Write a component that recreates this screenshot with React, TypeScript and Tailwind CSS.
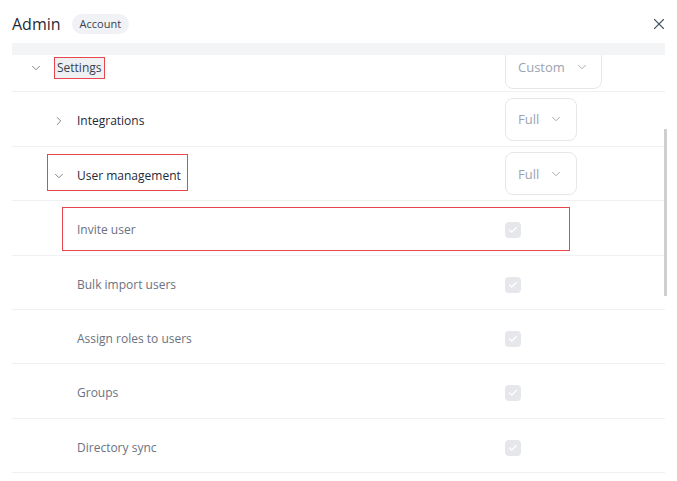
import { X, ChevronDown, ChevronRight, Check } from "lucide-react";

const CHILDREN = [
  { label: "Invite user", h: "h-[55px]" },
  { label: "Bulk import users", h: "h-[54px]" },
  { label: "Assign roles to users", h: "h-[54px]" },
  { label: "Groups", h: "h-[55px]" },
  { label: "Directory sync", h: "h-[54px]" },
];

function Select({ label, wide }: { label: string; wide?: boolean }) {
  return (
    <div
      className={`flex items-center gap-2.5 h-[43px] px-3 rounded-lg border border-[#e5e7eb] text-[13px] text-[#9ca3af] ${
        wide ? "w-[97px]" : "w-[72px]"
      }`}
    >
      <span className="whitespace-nowrap pt-[2px]">{label}</span>
      <ChevronDown className="w-3.5 h-3.5" strokeWidth={1.5} />
    </div>
  );
}

function Checkbox() {
  return (
    <div className="w-4 h-4 rounded-[4px] bg-[#e5e7eb] flex items-center justify-center">
      <Check className="w-2.5 h-2.5 text-white" strokeWidth={3} />
    </div>
  );
}

export default function App() {
  return (
    <div className="relative w-[677px] h-[481px] bg-white overflow-hidden font-['Open_Sans',sans-serif]">
      {/* Header */}
      <div className="flex items-center h-[43px] pl-3 pr-[9px] pt-[5px]">
        <span className="text-[16px] text-[#1f2937]">Admin</span>
        <span className="ml-[11px] px-2 py-[2px] rounded-full bg-[#f1f2f5] text-[11px] text-[#374151]">Account</span>
        <X className="ml-auto w-[18px] h-[18px] text-[#4b5563]" strokeWidth={1.5} />
      </div>

      {/* Table body */}
      <div className="relative ml-3 mr-[12px] h-[438px] overflow-hidden">
        <div className="relative z-10 h-3 bg-[#f3f4f6]" />
        <div className="-mt-[18px]">
          {/* Settings */}
          <div className="flex items-center h-[55px] border-b border-[#eef0f2]">
            <div className="w-[493px] shrink-0 flex items-center pt-[8px]">
              <ChevronDown className="ml-[17px] w-3.5 h-3.5 text-[#6b7280]" strokeWidth={1.5} />
              <span className="ml-[11px] px-[2px] py-[1px] border border-[#e8464e] bg-[#eef0f2] text-[12px] font-medium text-[#374151]">
                Settings
              </span>
            </div>
            <div className="pt-[6px]">
              <Select label="Custom" wide />
            </div>
          </div>

          {/* Integrations */}
          <div className="flex items-center h-[55px] border-b border-[#eef0f2]">
            <div className="w-[493px] shrink-0 flex items-center pt-[4px]">
              <ChevronRight className="ml-[40px] w-3.5 h-3.5 text-[#6b7280]" strokeWidth={1.5} />
              <span className="ml-[11px] text-[12px] font-medium text-[#1f2937]">Integrations</span>
            </div>
            <Select label="Full" />
          </div>

          {/* User management */}
          <div className="relative flex items-center h-[54px] border-b border-[#eef0f2]">
            <div className="w-[493px] shrink-0 flex items-center pt-[4px]">
              <ChevronDown className="ml-[40px] w-3.5 h-3.5 text-[#6b7280]" strokeWidth={1.5} />
              <span className="ml-[11px] whitespace-nowrap text-[12px] font-medium text-[#1f2937]">User management</span>
            </div>
            <Select label="Full" />
            <div className="absolute left-[35px] top-[7px] w-[141px] h-[37px] border border-[#e8464e]" />
          </div>

          {/* Children */}
          {CHILDREN.map((row, i) => (
            <div key={row.label} className={`relative flex items-center ${row.h} border-b border-[#eef0f2]`}>
              <div className="w-[493px] shrink-0 pl-[65px] pt-[4px] text-[12px] text-[#6b7280]">{row.label}</div>
              <div className="pt-[4px]">
                <Checkbox />
              </div>
              {i === 0 && (
                <div className="absolute left-[50px] top-[6px] w-[508px] h-[44px] border border-[#e8464e]" />
              )}
            </div>
          ))}
        </div>
      </div>

      {/* Scrollbar */}
      <div className="absolute left-[664px] top-[129px] w-[3px] h-[167px] bg-[#cfcfcf]" />
    </div>
  );
}
